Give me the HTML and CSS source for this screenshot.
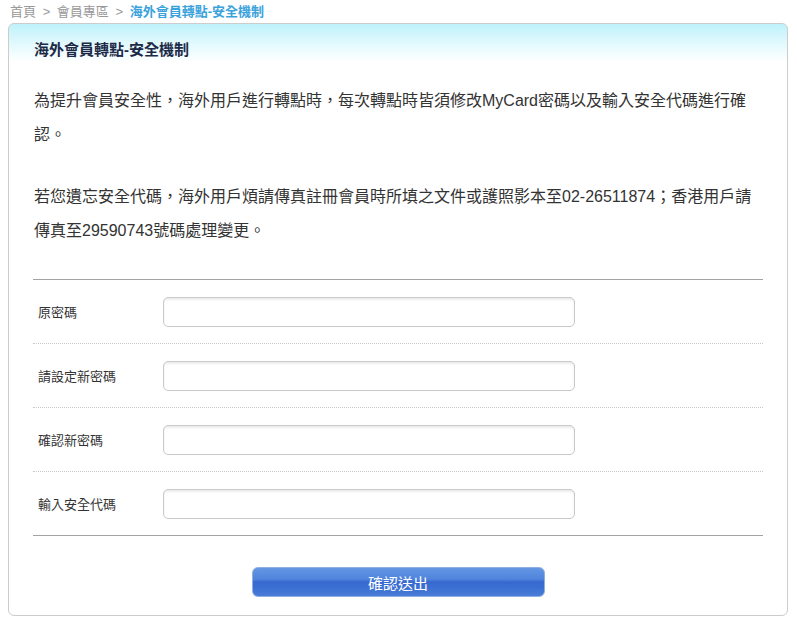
FILE: index.html
```html
<!DOCTYPE html>
<html>
<head>
    <meta charset="utf-8">
    <title>海外會員轉點-安全機制</title>
    <link rel="stylesheet" href="styles.css">
</head>
<body>
    <div class="crumb">
        <a href="#">首頁</a> <span class="sep">&gt;</span>
        <a href="#">會員專區</a> <span class="sep">&gt;</span>
        <span class="here">海外會員轉點-安全機制</span>
    </div>

    <div class="panel">
        <h2 class="panel-title">海外會員轉點-安全機制</h2>
        <div class="panel-body">
            <p class="note">為提升會員安全性，海外用戶進行轉點時，每次轉點時皆須修改MyCard密碼以及輸入安全代碼進行確認。</p>
            <p class="note">若您遺忘安全代碼，海外用戶煩請傳真註冊會員時所填之文件或護照影本至02-26511874；香港用戶請傳真至29590743號碼處理變更。</p>

            <div class="form">
                <div class="row">
                    <label>原密碼</label>
                    <input type="password">
                </div>
                <div class="row">
                    <label>請設定新密碼</label>
                    <input type="password">
                </div>
                <div class="row">
                    <label>確認新密碼</label>
                    <input type="password">
                </div>
                <div class="row">
                    <label>輸入安全代碼</label>
                    <input type="password">
                </div>
            </div>

            <div class="actions">
                <button>確認送出</button>
            </div>
        </div>
    </div>
</body>
</html>
```

FILE: styles.css
```css
body { margin: 4px 8px 8px; font-family: "Liberation Sans", "Noto Sans CJK TC", sans-serif; color: #333; background: #fff; }
.crumb { font-size: 13px; line-height: 16px; height: 19px; padding-left: 2px; color: #999; }
.crumb a { color: #999; text-decoration: none; }
.crumb .sep { margin: 0 3px; }
.crumb .here { color: #3ba3dc; font-weight: bold; }
.panel { width: 780px; box-sizing: border-box; border: 1px solid #ccc; border-radius: 6px; background: linear-gradient(#bef2fb 0, #e6fafd 22px, #fff 38px, #fff 100%); padding: 0 24px 18px; }
.panel-title { margin: 0; padding: 15px 0 0 1px; height: 45px; font-size: 15px; line-height: 21px; color: #1c2a48; }
.note { margin: 0 10px 29px 1px; font-size: 16px; line-height: 33.6px; color: #333; }
.form { border-top: 1px solid #a3a3a3; border-bottom: 1px solid #a3a3a3; margin-top: 32px; }
.row { display: flex; align-items: center; height: 63px; border-bottom: 1px dotted #c8c8c8; }
.row:last-child { border-bottom: none; }
.row label { width: 125px; padding-left: 5px; font-size: 13px; color: #333; }
.row input { width: 412px; height: 30px; box-sizing: border-box; border: 1px solid #c9c9c9; border-radius: 5px; box-shadow: inset 0 2px 2px rgba(0, 0, 0, 0.08); background: #fff; }
.actions { display: flex; justify-content: center; padding-top: 31px; }
button { width: 293px; height: 30px; border: 1px solid #8fb0e0; border-radius: 6px; color: #fff; font-family: inherit; font-size: 15px; cursor: pointer; background: linear-gradient(#6496e3 0, #4f84dc 40%, #3768cf 50%, #3f73d4 80%, #4a7cd8 100%); }
```
